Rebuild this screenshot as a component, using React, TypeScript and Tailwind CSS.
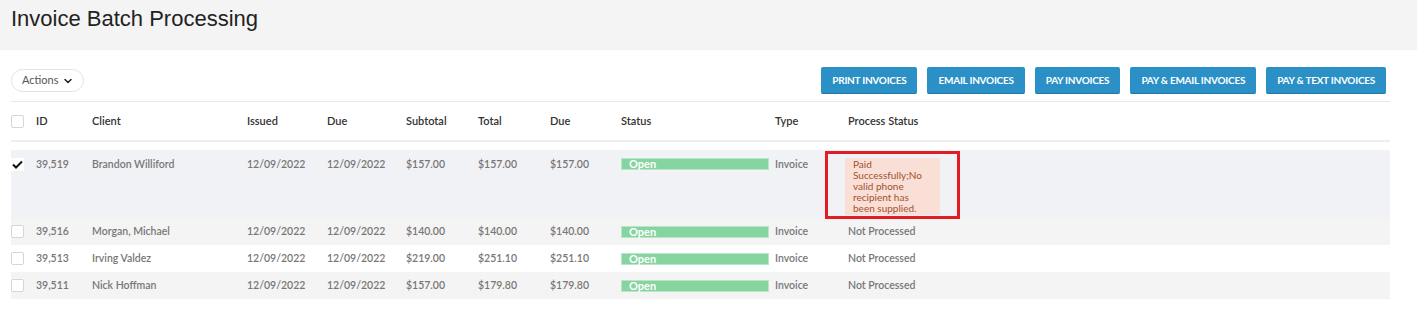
import { ChevronDown } from 'lucide-react';

type Row = {
  id: string;
  client: string;
  issued: string;
  due: string;
  subtotal: string;
  total: string;
  balance: string;
  checked?: boolean;
  note?: string;
  bg: string;
};

const rows: Row[] = [
  {
    id: '39,519',
    client: 'Brandon Williford',
    issued: '12/09/2022',
    due: '12/09/2022',
    subtotal: '$157.00',
    total: '$157.00',
    balance: '$157.00',
    checked: true,
    note: 'Paid Successfully;No valid phone recipient has been supplied.',
    bg: 'bg-[#f1f2f6]',
  },
  {
    id: '39,516',
    client: 'Morgan, Michael',
    issued: '12/09/2022',
    due: '12/09/2022',
    subtotal: '$140.00',
    total: '$140.00',
    balance: '$140.00',
    bg: 'bg-[#f4f4f4]',
  },
  {
    id: '39,513',
    client: 'Irving Valdez',
    issued: '12/09/2022',
    due: '12/09/2022',
    subtotal: '$219.00',
    total: '$251.10',
    balance: '$251.10',
    bg: 'bg-white',
  },
  {
    id: '39,511',
    client: 'Nick Hoffman',
    issued: '12/09/2022',
    due: '12/09/2022',
    subtotal: '$157.00',
    total: '$179.80',
    balance: '$179.80',
    bg: 'bg-[#f4f4f4]',
  },
];

const actions = ['Print Invoices', 'Email Invoices', 'Pay Invoices', 'Pay & Email Invoices', 'Pay & Text Invoices'];

const cols = 'grid grid-cols-[25px_56px_155px_80px_79px_72px_72px_71px_154px_73px_1fr]';

const Checkbox = ({ checked }: { checked?: boolean }) =>
  checked ? (
    <div className="w-[13px] h-[13px] bg-white flex items-center justify-center">
      <svg width="11" height="9" viewBox="0 0 11 9">
        <path d="M1 4.5 L4 7.5 L10 1.5" fill="none" stroke="#111" strokeWidth="2" />
      </svg>
    </div>
  ) : (
    <div className="w-[13px] h-[13px] bg-white border border-[#d6d6d6] rounded-[2px]" />
  );

export default function App() {
  return (
    <div className="w-[1417px] h-[309px] bg-white font-['Lato',sans-serif] overflow-hidden">
      <div className="h-[50px] bg-[#f4f4f4] px-[11px] pt-[5px]">
        <h1 className="text-[22px] text-[#222] font-['Liberation_Sans',sans-serif] font-light leading-[28px]">
          Invoice Batch Processing
        </h1>
      </div>

      <div className="pl-[11px] pr-[27px] pt-[17px]">
        {/* toolbar */}
        <div className="flex items-center justify-between pb-[7px] border-b border-[#e8e8e8]">
          <button className="h-[23px] pl-[10px] pr-[9px] rounded-full border border-[#e3e3e3] flex items-center gap-[4px] text-[11px] text-[#555]">
            Actions
            <ChevronDown size={12} strokeWidth={3} className="text-[#222]" />
          </button>
          <div className="flex gap-[10px] mr-[4px]">
            {actions.map((a) => (
              <button
                key={a}
                className="h-[27px] px-[11px] rounded-[2px] bg-[#2a90c5] border-b border-[#1f79a8] text-white text-[10px] font-bold uppercase tracking-tight"
              >
                {a}
              </button>
            ))}
          </div>
        </div>

        {/* header */}
        <div className={`${cols} h-[40px] items-center border-b-2 border-[#eeeeee] text-[11px] font-semibold text-[#333]`}>
          <Checkbox />
          <div>ID</div>
          <div>Client</div>
          <div>Issued</div>
          <div>Due</div>
          <div>Subtotal</div>
          <div>Total</div>
          <div>Due</div>
          <div>Status</div>
          <div>Type</div>
          <div>Process Status</div>
        </div>

        {/* rows */}
        <div className="mt-[8px] text-[10.5px] font-semibold text-[#777]">
          {rows.map((r) => (
            <div
              key={r.id}
              className={`${cols} ${r.bg} ${r.note ? 'h-[68px] items-start pt-[7px]' : 'h-[27px] items-center'}`}
            >
              <div className={r.note ? 'pt-[1px]' : ''}>
                <Checkbox checked={r.checked} />
              </div>
              <div>{r.id}</div>
              <div>{r.client}</div>
              <div>{r.issued}</div>
              <div>{r.due}</div>
              <div>{r.subtotal}</div>
              <div>{r.total}</div>
              <div>{r.balance}</div>
              <div className="pr-[6px] pt-[1px]">
                <div className="h-[12px] bg-[#86d4a0] border border-[#b9e6c7] text-white font-bold text-[11px] leading-[10px] pl-[7px]">
                  Open
                </div>
              </div>
              <div>Invoice</div>
              <div className="relative">
                {r.note ? (
                  <>
                    <div className="ml-[-3px] mt-[1px] w-[95px] bg-[#fadfd7] px-[8px] pt-[1px] pb-[1px] text-[10px] leading-[11px] font-normal text-[#a0522d]">
                      {r.note}
                    </div>
                    <div className="absolute left-[-23px] top-[-6px] w-[135px] h-[68px] border-[3px] border-[#e31b23]" />
                  </>
                ) : (
                  'Not Processed'
                )}
              </div>
            </div>
          ))}
        </div>
      </div>
    </div>
  );
}
